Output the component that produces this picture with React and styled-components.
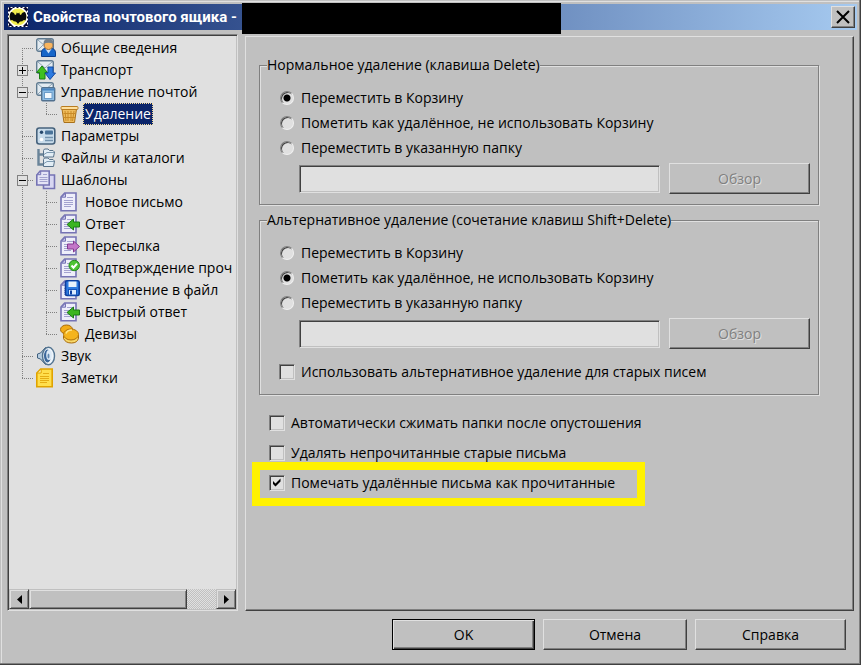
import React, { useState } from 'react';
import styled, { createGlobalStyle, css } from 'styled-components';

const face = '#c0c0c0';
const light = '#e0e0e0';
const shadow = '#808080';
const dark = '#404040';
const navy = '#0a246a';

const GlobalStyle = createGlobalStyle`
  * {
    box-sizing: border-box;
  }

  body {
    margin: 0;
    background: ${face};
    color: #000;
    font-family: 'Open Sans', 'Noto Sans', sans-serif;
    font-size: 14px;
    line-height: 20px;
  }

  button,
  input {
    font: inherit;
    color: inherit;
    margin: 0;
  }
`;

const raised = css`
  background: ${face};
  border: 1px solid;
  border-color: ${light} ${dark} ${dark} ${light};
  box-shadow: inset -1px -1px 0 ${shadow};
`;

const Window = styled.main`
  display: flex;
  flex-direction: column;
  min-height: 100vh;
  padding: 4px;
  background: ${face};
  box-shadow: inset -1px -1px 0 ${dark}, inset -2px -2px 0 ${shadow},
    inset 1px 1px 0 ${face}, inset 2px 2px 0 ${light};
`;

const TitleBar = styled.header`
  display: flex;
  align-items: center;
  height: 26px;
  padding: 0 2px 0 4px;
  background: linear-gradient(to right, ${navy}, #a6caf0);

  h1 {
    flex: 0 0 209px;
    margin: 0 0 0 5px;
    color: #fff;
    font: bold 15px/26px 'Roboto', 'Liberation Sans', sans-serif;
    white-space: nowrap;
  }
`;

const Account = styled.span`
  flex: 0 1 319px;
  height: 31px;
  margin-top: 3px;
  background: #000;
`;

const CloseButton = styled.button`
  ${raised}
  display: flex;
  align-items: center;
  justify-content: center;
  width: 24px;
  height: 22px;
  margin-left: auto;
  padding: 0;
`;

const Body = styled.div`
  flex: 1;
  display: flex;
  gap: 7px;
  padding: 4px 3px 0;
`;

const Sidebar = styled.nav`
  flex: 0 0 231px;
  display: flex;
  flex-direction: column;
  min-width: 0;
  background: ${light};
  border: 1px solid;
  border-color: ${shadow} ${light} ${light} ${shadow};
  box-shadow: inset 1px 1px 0 ${dark}, inset -1px -1px 0 ${face};
  padding: 1px;
`;

const Tree = styled.ul`
  flex: 1;
  margin: 0;
  padding: 1px 0 0 1px;
  list-style: none;
  overflow: hidden;
`;

const TreeRow = styled.li`
  display: flex;
  height: 22px;
  white-space: nowrap;
`;

const dotsDown = `repeating-linear-gradient(to bottom, ${shadow} 0 1px, transparent 1px 2px)`;
const dotsRight = `repeating-linear-gradient(to right, ${shadow} 0 1px, transparent 1px 2px)`;

const guides = {
  first: `${dotsDown} 12px 11px / 1px 11px no-repeat, ${dotsRight} 12px 11px / 12px 1px no-repeat`,
  line: `${dotsDown} 12px 0 / 1px 22px no-repeat`,
  tee: `${dotsDown} 12px 0 / 1px 22px no-repeat, ${dotsRight} 12px 11px / 12px 1px no-repeat`,
  end: `${dotsDown} 12px 0 / 1px 12px no-repeat, ${dotsRight} 12px 11px / 12px 1px no-repeat`,
};

const Guide = styled.span`
  flex: 0 0 24px;
  padding: 6px 0 0 7px;
  background: ${({ $kind }) => guides[$kind]};
`;

const Expander = styled.button`
  display: block;
  width: 11px;
  height: 11px;
  padding: 0;
  border: 1px solid ${shadow};
  background: ${light};

  svg {
    display: block;
  }
`;

const TreeIcon = styled.svg`
  flex: 0 0 20px;
  width: 20px;
  height: 20px;
  margin: 1px 3px 0 2px;
`;

const TreeLabel = styled.a`
  padding: 0 2px;
  color: ${({ $selected }) => ($selected ? '#fff' : '#000')};
  background: ${({ $selected }) => ($selected ? navy : 'transparent')};
  outline: ${({ $selected }) => ($selected ? '1px dotted #f5db95' : 'none')};
  outline-offset: -1px;
  line-height: 22px;
  text-decoration: none;
`;

const ScrollBar = styled.div`
  display: flex;
  height: 20px;
  background: repeating-conic-gradient(${face} 0 25%, ${light} 0 50%) 0 0 / 2px 2px;
`;

const ScrollButton = styled.button`
  display: flex;
  align-items: center;
  justify-content: center;
  width: 20px;
  padding: 0;
  background: ${face};
  border: 1px solid;
  border-color: ${face} ${dark} ${dark} ${face};
  box-shadow: inset 1px 1px 0 ${light}, inset -1px -1px 0 ${shadow};
`;

const ScrollThumb = styled(ScrollButton)`
  width: 158px;
  margin-right: auto;
`;

const Page = styled.section`
  flex: 1;
  min-width: 0;
  margin-top: 2px;
  padding: 18px 34px 18px 13px;
  ${raised}
`;

const Group = styled.fieldset`
  min-width: 0;
  margin: 0 0 5px;
  padding: 10px 8px 10px 19px;
  border: 1px solid ${shadow};
  box-shadow: 1px 1px 0 ${light}, inset 1px 1px 0 ${light};

  legend {
    margin-left: -12px;
    padding: 0;
    background: ${face};
  }
`;

const Option = styled.label`
  position: relative;
  display: flex;
  align-items: center;
  gap: 6px;
  width: fit-content;
  height: ${({ $tall }) => ($tall ? '30px' : '25px')};
`;

const MarkedOption = styled(Option)`
  &::after {
    content: '';
    position: absolute;
    inset: -6px -30px -8px -17px;
    border: 8px solid #fff200;
    pointer-events: none;
  }
`;

const RadioInput = styled.input.attrs({ type: 'radio' })`
  appearance: none;
  width: 14px;
  height: 14px;
  margin: 0 1px;
  border: 1px solid;
  border-color: ${shadow} #f0f0f0 #f0f0f0 ${shadow};
  border-radius: 50%;
  background: ${light};
  box-shadow: inset 1px 1px 0 ${dark};

  &:checked {
    background: radial-gradient(circle, #000 0 3px, ${light} 4px);
  }
`;

const CheckFrame = styled.span`
  display: grid;
  place-items: center;

  input,
  svg {
    grid-area: 1 / 1;
  }

  svg {
    pointer-events: none;
  }
`;

const CheckInput = styled.input.attrs({ type: 'checkbox' })`
  appearance: none;
  width: 16px;
  height: 16px;
  border: 1px solid;
  border-color: ${shadow} ${light} ${light} ${shadow};
  background: ${light};
  box-shadow: inset 1px 1px 0 ${dark}, inset -1px -1px 0 ${face};

  &:not(:checked) + svg {
    visibility: hidden;
  }
`;

const FolderRow = styled.div`
  display: flex;
  align-items: center;
  gap: 9px;
  margin: 3px 0 0 20px;
`;

const FolderInput = styled.input`
  flex: 1;
  min-width: 0;
  height: 28px;
  padding: 0 4px;
  border: 1px solid;
  border-color: ${shadow} ${light} ${light} ${shadow};
  background: ${light};
  box-shadow: inset 1px 1px 0 ${dark}, inset -1px -1px 0 ${face};
`;

const Button = styled.button`
  ${raised}
  width: ${({ $width }) => $width || 144}px;
  height: 31px;
  padding: 0;

  &:disabled {
    color: ${shadow};
    text-shadow: 1px 1px 0 ${light};
  }
`;

const DefaultButton = styled(Button)`
  border-color: #000;
  box-shadow: inset 1px 1px 0 ${light}, inset -1px -1px 0 ${dark}, inset -2px -2px 0 ${shadow};
`;

const OldMessages = styled.div`
  margin-top: 10px;
`;

const Extras = styled.div`
  margin-top: 13px;
  padding-left: 10px;
`;

const Footer = styled.footer`
  display: flex;
  justify-content: flex-end;
  gap: 8px;
  padding: 8px 11px 11px;
`;

const Envelope = () => (
  <>
    <rect x='.7' y='.7' width='16.600' height='12.600' rx='2' fill='#e3ebf1' stroke='#5f7a90' strokeWidth='1.400' />
    <path d='M2 2l7 6 7-6M2 12l5-5M16 12l-5-5' fill='none' stroke='#8fa5b6' />
  </>
);

const Sheet = () => (
  <>
    <path d='M4.700 1h11.300v17.800h-15V5z' fill='#eeeefa' stroke='#7573b4' strokeWidth='1.600' />
    <path d='M1.500 5.200l4-4v4z' fill='#c9c8ea' stroke='#7573b4' />
    <path d='M7 5.500h6M4 8.500h9M4 10.500h9M4 12.500h9M4 14.500h7' stroke='#a3a2cf' />
  </>
);

const icons = {
  general: (
    <>
      <Envelope />
      <path d='M5.500 18.500v-3.500q0-4.500 4-4.500h5.500q4.500 0 4.500 4.500v3.500z' fill='#1766c9' stroke='#0b3f8f' />
      <path d='M9.500 11l3 4.500 3-4.500z' fill='#cfe0f5' />
      <circle cx='12.500' cy='7' r='4.500' fill='#f8b55f' stroke='#8b6b4c' />
      <path d='M7.500 6q0-5.500 5-5.500t5 5.500q-5-2.500-10 0z' fill='#74808c' />
    </>
  ),
  transport: (
    <>
      <Envelope />
      <path d='M6 6l5.500 6.500H9V19H3.500v-6.500H.5z' fill='#3fc01f' stroke='#1b7d12' />
      <path d='M14 19.500l5.500-6.500H17V7h-5v6H9z' fill='#2c7ae0' stroke='#134aa3' />
    </>
  ),
  mail: (
    <>
      <Envelope />
      <rect x='5.700' y='5.700' width='13' height='13' rx='1' fill='#8ebde4' stroke='#52718f' strokeWidth='1.400' />
      <path d='M6 7.500h12.500' stroke='#4a86c2' strokeWidth='2' />
      <rect x='8.500' y='10.500' width='7.500' height='6' fill='#f2f8fd' stroke='#6c9cc8' />
    </>
  ),
  bin: (
    <>
      <path d='M2 5h14.500l-2 13.500H4z' fill='#efbc5c' stroke='#a8701a' />
      <path d='M5 7l1 10M8 7v10M11 7v10M14 7l-1.500 10M3.500 9.500h12M4 13.500h11' stroke='#c98a26' />
      <rect x='1' y='2.500' width='17' height='3' rx='1' fill='#ffdf9c' stroke='#b97c20' />
    </>
  ),
  options: (
    <>
      <rect x='.8' y='2' width='18' height='16' rx='2.500' fill='#c9dceb' stroke='#46627c' strokeWidth='1.600' />
      <circle cx='5.500' cy='6.300' r='1.700' fill='#26486c' />
      <circle cx='5.500' cy='13.500' r='1.800' fill='#fff' />
      <rect x='9' y='4.500' width='8' height='4' rx='1' fill='#4a7399' />
      <path d='M9 11.500h8M9 14.500h8' stroke='#7493ae' strokeWidth='1.400' />
    </>
  ),
  folders: (
    <>
      <path d='M2.500 1v15.500H8M2.500 6.500H8' fill='none' stroke='#6a8499' strokeWidth='2.400' />
      <path d='M7.500 2.500l1-1.500h3.500l1.500 1.500h3.500l1.500 1.500-1 5h-10z' fill='#e2edf5' stroke='#58728a' />
      <path d='M7.500 11.500l1-1.500h3.500l1.500 1.500h3.500l1.500 1.500-1 5.500h-10z' fill='#e2edf5' stroke='#58728a' />
      <path d='M8 6.500l3-2h7M8 15.500l3-2h7' fill='none' stroke='#7f9bb2' />
    </>
  ),
  templates: (
    <>
      <path d='M9.500 5h9v13.500h-11v-12z' fill='#d8d7f2' stroke='#7573b4' strokeWidth='1.600' />
      <path d='M4.200 1h9v14h-12.400V5z' fill='#e4e3f6' stroke='#7573b4' strokeWidth='1.600' />
      <path d='M1 4.700l3.700-3.700v3.700z' fill='#c9c8ea' stroke='#7573b4' />
      <path d='M7 4.500h4M3.500 7.500h8M3.500 9.500h8M3.500 11.500h8' stroke='#a3a2cf' />
    </>
  ),
  sheet: <Sheet />,
  reply: (
    <>
      <Sheet />
      <path d='M7 10.500l6.500-5.500v3h6v5h-6v3z' fill='#3cb521' stroke='#1b7a16' />
    </>
  ),
  forward: (
    <>
      <Sheet />
      <path d='M19.500 10.500L13.500 5v3h-6v5h6v3z' fill='#c376c8' stroke='#823a90' />
    </>
  ),
  confirm: (
    <>
      <Sheet />
      <circle cx='14.200' cy='7.500' r='5.200' fill='#4dc433' stroke='#21861a' />
      <path d='M11.500 7.500l2 2.200 3.500-4' fill='none' stroke='#fff' strokeWidth='2' />
    </>
  ),
  save: (
    <>
      <Sheet />
      <rect x='5.500' y='.8' width='13.700' height='14.700' rx='1.500' fill='#2f7be0' stroke='#0d3e9e' strokeWidth='1.600' />
      <rect x='8.500' y='1.500' width='8' height='5.500' fill='#e9f2fc' />
      <rect x='8.500' y='9.500' width='8' height='5.500' fill='#dcebff' stroke='#1552b8' />
      <rect x='10' y='10.500' width='2' height='4' fill='#0d3e9e' />
    </>
  ),
  coins: (
    <>
      <ellipse cx='6.500' cy='5.500' rx='6' ry='4.500' fill='#f2ac18' stroke='#a8690a' />
      <path d='M3.500 12v2.500q2 4.500 8 4.500t7-5V11z' fill='#f8d96a' stroke='#a8690a' />
      <ellipse cx='11' cy='10.500' rx='7.500' ry='5.500' fill='#f5b41d' stroke='#b3740c' />
      <path d='M6 9.500q1-3.500 6-3.500' fill='none' stroke='#ffe58a' strokeWidth='1.400' />
    </>
  ),
  sound: (
    <>
      <path d='M1.500 8l3-1 5-5.500v17l-5-5.500-3-1z' fill='#b7cde0' stroke='#3f5f7e' />
      <ellipse cx='12.500' cy='10' rx='6' ry='8.700' fill='#edf4fa' stroke='#527390' strokeWidth='1.400' />
      <ellipse cx='11.500' cy='10' rx='3.500' ry='6.500' fill='#3b679b' />
      <ellipse cx='13' cy='9' rx='2.800' ry='5' fill='#dbe9f6' />
      <ellipse cx='12.500' cy='10' rx='1' ry='2.500' fill='#5f86b0' />
    </>
  ),
  notes: (
    <>
      <path d='M4.700 1h11.500v17.800H.8V5z' fill='#ffdf4d' stroke='#e0a300' strokeWidth='1.600' />
      <path d='M1.200 5l4-4v4z' fill='#fff3b0' stroke='#e0a300' />
      <path d='M7 5.500h6M4 8.500h9M4 10.500h9M4 12.500h9M4 14.500h7' stroke='#e5ad14' />
    </>
  ),
};

const items = [
  { label: 'Общие сведения', icon: 'general', guide: ['first'] },
  { label: 'Транспорт', icon: 'transport', guide: ['tee'], sign: '+' },
  { label: 'Управление почтой', icon: 'mail', guide: ['tee'], sign: '-' },
  { label: 'Удаление', icon: 'bin', guide: ['line', 'end'] },
  { label: 'Параметры', icon: 'options', guide: ['tee'] },
  { label: 'Файлы и каталоги', icon: 'folders', guide: ['tee'] },
  { label: 'Шаблоны', icon: 'templates', guide: ['tee'], sign: '-' },
  { label: 'Новое письмо', icon: 'sheet', guide: ['line', 'tee'] },
  { label: 'Ответ', icon: 'reply', guide: ['line', 'tee'] },
  { label: 'Пересылка', icon: 'forward', guide: ['line', 'tee'] },
  { label: 'Подтверждение проч', icon: 'confirm', guide: ['line', 'tee'] },
  { label: 'Сохранение в файл', icon: 'save', guide: ['line', 'tee'] },
  { label: 'Быстрый ответ', icon: 'reply', guide: ['line', 'tee'] },
  { label: 'Девизы', icon: 'coins', guide: ['line', 'end'] },
  { label: 'Звук', icon: 'sound', guide: ['tee'] },
  { label: 'Заметки', icon: 'notes', guide: ['end'] },
];

const modes = [
  'Переместить в Корзину',
  'Пометить как удалённое, не использовать Корзину',
  'Переместить в указанную папку',
];

const AppIcon = () => (
  <svg width='20' height='20' viewBox='0 0 20 20' aria-hidden='true'>
    <rect width='20' height='20' fill='#fff' />
    <rect x='.5' y='.5' width='19' height='19' fill='none' stroke='#0a0a30' strokeDasharray='2 2' />
    <path d='M1 1h4L1 5zM19 1h-4l4 4zM1 19h4l-4-4zM19 19h-4l4-4z' fill='#0a0a30' />
    <circle cx='10' cy='10' r='8.500' fill='#f3ee4e' />
    <path
      d='M3 5q3 0 4 3 1.500 0 1.700-2.500L10 6.500l1.300-1Q11.500 8 13 8q1-3 4-3 2.500 4 .5 8.500-2-1.500-3.500 1-2-1-4 2.500-2-3.500-4-2.500-1.500-2.500-3.500-1Q.5 9 3 5z'
      fill='#0b0b0b'
    />
  </svg>
);

const Check = ({ children, tall, marked, checked }) => {
  const Row = marked ? MarkedOption : Option;
  return (
    <Row $tall={tall}>
      <CheckFrame>
        <CheckInput defaultChecked={checked} />
        <svg width='16' height='16' viewBox='0 0 16 16' aria-hidden='true'>
          <path d='M4 6v3l2.500 2.500L11.500 6.500v-3L6.500 8.500z' />
        </svg>
      </CheckFrame>
      {children}
    </Row>
  );
};

const DeletionGroup = ({ title, name, initial, children }) => {
  const [mode, setMode] = useState(initial);
  const disabled = mode !== 2;

  return (
    <Group>
      <legend>{title}</legend>
      {modes.map((text, i) => (
        <Option key={text}>
          <RadioInput name={name} checked={mode === i} onChange={() => setMode(i)} />
          {text}
        </Option>
      ))}
      <FolderRow>
        <FolderInput type='text' aria-label='Папка' disabled={disabled} />
        <Button $width={141} type='button' disabled={disabled}>
          Обзор
        </Button>
      </FolderRow>
      {children}
    </Group>
  );
};

const App = () => {
  const [selected, setSelected] = useState('Удаление');

  return (
    <>
      <GlobalStyle />
      <Window>
        <TitleBar>
          <AppIcon />
          <h1>Свойства почтового ящика -</h1>
          <Account />
          <CloseButton type='button' aria-label='Закрыть'>
            <svg width='14' height='14' viewBox='0 0 14 14'>
              <path d='M1 1l12 12M13 1L1 13' stroke='#000' strokeWidth='2' />
            </svg>
          </CloseButton>
        </TitleBar>
        <Body>
          <Sidebar>
            <Tree>
              {items.map(({ label, icon, guide, sign }) => (
                <TreeRow key={label}>
                  {guide.map((kind, i) => (
                    <Guide key={i} $kind={kind}>
                      {sign && (
                        <Expander type='button' aria-label={label}>
                          <svg width='9' height='9' viewBox='0 0 9 9'>
                            <path d={sign === '+' ? 'M1 4.500h7M4.500 1v7' : 'M1 4.500h7'} stroke='#000' />
                          </svg>
                        </Expander>
                      )}
                    </Guide>
                  ))}
                  <TreeIcon viewBox='0 0 20 20' aria-hidden='true'>
                    {icons[icon]}
                  </TreeIcon>
                  <TreeLabel href='#' $selected={label === selected} onClick={() => setSelected(label)}>
                    {label}
                  </TreeLabel>
                </TreeRow>
              ))}
            </Tree>
            <ScrollBar>
              <ScrollButton type='button' aria-label='Влево'>
                <svg width='5' height='9' viewBox='0 0 5 9'>
                  <path d='M5 0v9L0 4.500z' />
                </svg>
              </ScrollButton>
              <ScrollThumb type='button' aria-label='Прокрутка' />
              <ScrollButton type='button' aria-label='Вправо'>
                <svg width='5' height='9' viewBox='0 0 5 9'>
                  <path d='M0 0v9l5-4.500z' />
                </svg>
              </ScrollButton>
            </ScrollBar>
          </Sidebar>
          <Page>
            <DeletionGroup title='Нормальное удаление (клавиша Delete)' name='normal' initial={0} />
            <DeletionGroup
              title='Альтернативное удаление (сочетание клавиш Shift+Delete)'
              name='alternative'
              initial={1}
            >
              <OldMessages>
                <Check>Использовать альтернативное удаление для старых писем</Check>
              </OldMessages>
            </DeletionGroup>
            <Extras>
              <Check tall>Автоматически сжимать папки после опустошения</Check>
              <Check tall>Удалять непрочитанные старые письма</Check>
              <Check tall marked checked>
                Помечать удалённые письма как прочитанные
              </Check>
            </Extras>
          </Page>
        </Body>
        <Footer>
          <DefaultButton type='button' $width={143}>
            OK
          </DefaultButton>
          <Button type='button'>Отмена</Button>
          <Button type='button' $width={151}>
            Справка
          </Button>
        </Footer>
      </Window>
    </>
  );
};

export default App;
